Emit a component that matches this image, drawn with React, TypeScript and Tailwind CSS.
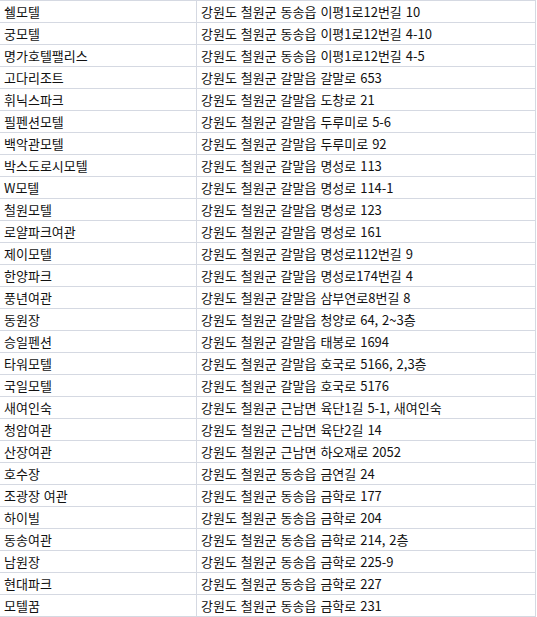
import React from 'react';

const rows: [string, string][] = [
  ['쉘모텔', '강원도 철원군 동송읍 이평1로12번길 10'],
  ['궁모텔', '강원도 철원군 동송읍 이평1로12번길 4-10'],
  ['명가호텔팰리스', '강원도 철원군 동송읍 이평1로12번길 4-5'],
  ['고다리조트', '강원도 철원군 갈말읍 갈말로 653'],
  ['휘닉스파크', '강원도 철원군 갈말읍 도창로 21'],
  ['필펜션모텔', '강원도 철원군 갈말읍 두루미로 5-6'],
  ['백악관모텔', '강원도 철원군 갈말읍 두루미로 92'],
  ['박스도로시모텔', '강원도 철원군 갈말읍 명성로 113'],
  ['W모텔', '강원도 철원군 갈말읍 명성로 114-1'],
  ['철원모텔', '강원도 철원군 갈말읍 명성로 123'],
  ['로얄파크여관', '강원도 철원군 갈말읍 명성로 161'],
  ['제이모텔', '강원도 철원군 갈말읍 명성로112번길 9'],
  ['한양파크', '강원도 철원군 갈말읍 명성로174번길 4'],
  ['풍년여관', '강원도 철원군 갈말읍 삼부연로8번길 8'],
  ['동원장', '강원도 철원군 갈말읍 청양로 64, 2~3층'],
  ['승일펜션', '강원도 철원군 갈말읍 태봉로 1694'],
  ['타워모텔', '강원도 철원군 갈말읍 호국로 5166, 2,3층'],
  ['국일모텔', '강원도 철원군 갈말읍 호국로 5176'],
  ['새여인숙', '강원도 철원군 근남면 육단1길 5-1, 새여인숙'],
  ['청암여관', '강원도 철원군 근남면 육단2길 14'],
  ['산장여관', '강원도 철원군 근남면 하오재로 2052'],
  ['호수장', '강원도 철원군 동송읍 금연길 24'],
  ['조광장 여관', '강원도 철원군 동송읍 금학로 177'],
  ['하이빌', '강원도 철원군 동송읍 금학로 204'],
  ['동송여관', '강원도 철원군 동송읍 금학로 214, 2층'],
  ['남원장', '강원도 철원군 동송읍 금학로 225-9'],
  ['현대파크', '강원도 철원군 동송읍 금학로 227'],
  ['모텔꿈', '강원도 철원군 동송읍 금학로 231'],
];

export default function App() {
  return (
    <div className="w-[537px] h-[617px] bg-white overflow-hidden">
      <div
        className="w-[536px] border-t border-r border-[#d5d9e2] text-[13px] text-[#111] [word-spacing:1px]"
        style={{ fontFamily: '"Noto Sans CJK KR", "Noto Sans", sans-serif' }}
      >
        {rows.map(([name, addr]) => (
          <div key={name} className="grid grid-cols-[197px_1fr] h-[22px] border-b border-[#d5d9e2]">
            <div className="border-r border-[#d5d9e2] pl-[4px] leading-[21px] whitespace-nowrap">{name}</div>
            <div className="pl-[4px] leading-[21px] whitespace-nowrap">{addr}</div>
          </div>
        ))}
      </div>
    </div>
  );
}
